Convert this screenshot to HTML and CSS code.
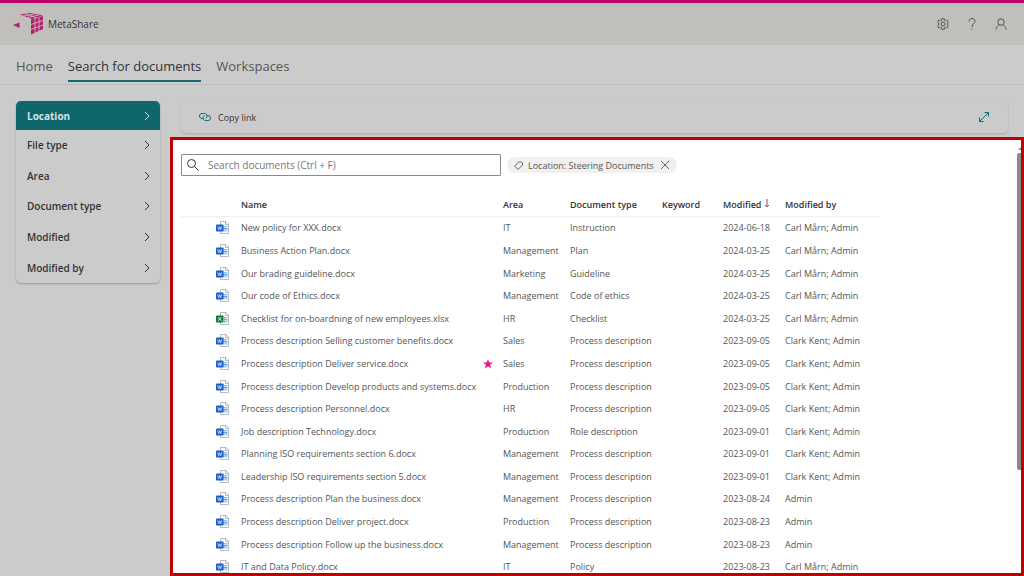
FILE: index.html
```html
<!DOCTYPE html>
<html lang="en">
<head>
    <meta charset="UTF-8">
    <meta name="viewport" content="width=device-width, initial-scale=1.0">
    <title>MetaShare</title>
    <link rel="stylesheet" href="styles.css">
</head>
<body>
    <!-- shared icons -->
    <svg class="sprite" aria-hidden="true">
        <symbol id="chevron" viewBox="0 0 8 10">
            <path d="M2 1l4 4-4 4" fill="none" stroke="currentColor" stroke-width="1"/>
        </symbol>
        <symbol id="word" viewBox="0 0 26 26">
            <path d="M9 1h11l5 5v19H9z" fill="#fff" stroke="#a3a3a3" stroke-width="1.5"/>
            <path d="M19 1v6h6" fill="none" stroke="#a3a3a3" stroke-width="1.5"/>
            <path d="M14 10h9v3h-9z" fill="#8cc4f7"/>
            <path d="M14 14h9v3h-9z" fill="#5fa3ea"/>
            <path d="M14 18h9v3h-9z" fill="#a9d0f7"/>
            <rect x="0" y="7" width="15" height="14" rx="1.5" fill="#1f5fc4"/>
            <path d="M3.500 10.500l2 7 2-6 2 6 2-7" fill="none" stroke="#dbe7f8" stroke-width="1.500"/>
        </symbol>
        <symbol id="excel" viewBox="0 0 26 26">
            <path d="M9 1h11l5 5v19H9z" fill="#fff" stroke="#a3a3a3" stroke-width="1.5"/>
            <path d="M19 1v6h6" fill="none" stroke="#a3a3a3" stroke-width="1.5"/>
            <path d="M16 10h3v3h-3zM16 18h3v3h-3z" fill="#4db882"/>
            <path d="M20 10h3v3h-3zM20 18h3v3h-3z" fill="#9bdcb6"/>
            <path d="M16 14h7v3h-7z" fill="#66c793"/>
            <rect x="0" y="7" width="15" height="14" rx="1.5" fill="#107c41"/>
            <path d="M4.500 10.500l6 7M10.500 10.500l-6 7" fill="none" stroke="#fff" stroke-width="1.800"/>
        </symbol>
    </svg>

    <header class="topbar">
        <svg class="logo" viewBox="0 0 30 22" aria-hidden="true">
            <path d="M0 12l6.500-2.500v5.500z" fill="#b71c6e"/>
            <path d="M7 1.500l10-1.500 13 2.500-11 3.500z" fill="#b71c6e"/>
            <path d="M18 6.500l12-3.500v13l-12 5.500z" fill="#b71c6e"/>
            <path d="M18 11.500l12-4M18 16.500l12-4.500M22 5v15.500M26 4v15M10 3l11-2M14 4.500l12-2.500M12 .5l12 4.500" fill="none" stroke="#c1bfbc" stroke-width=".9"/>
        </svg>
        <span class="brand">MetaShare</span>
        <div class="actions">
            <button type="button" aria-label="Settings">
                <svg width="12" height="12" viewBox="0 0 24 24" fill="none" stroke="currentColor" stroke-width="2">
                    <path d="M9.500 1.500h5l.7 3 1.600.9 3-1.500 3 3.800-1.800 2.500v3.600l1.800 2.500-3 3.800-3-1.500-1.600.9-.7 3h-5l-.7-3-1.600-.9-3 1.500-3-3.800L3 13.800v-3.600L1.200 7.700l3-3.800 3 1.500 1.600-.9z"/>
                    <circle cx="12" cy="12" r="4"/>
                </svg>
            </button>
            <button type="button" aria-label="Help">
                <svg width="12" height="12" viewBox="0 0 12 12" fill="none" stroke="currentColor" stroke-width="1">
                    <path d="M3 3.500C3 1.500 4.300.5 6 .5s3 1.200 3 2.800C9 5.600 6 5.800 6 9M6 10.500v1.200"/>
                </svg>
            </button>
            <button type="button" aria-label="Account">
                <svg width="12" height="12" viewBox="0 0 12 12" fill="none" stroke="currentColor" stroke-width="1">
                    <circle cx="6" cy="4" r="3.200"/>
                    <path d="M1 11.500c.3-2.500 1.500-4 3.300-4.700M11 11.500c-.3-2.500-1.500-4-3.300-4.700"/>
                </svg>
            </button>
        </div>
    </header>

    <nav class="tabs">
        <a href="#">Home</a>
        <a href="#" class="active">Search for documents</a>
        <a href="#">Workspaces</a>
    </nav>

    <div class="main">
        <aside class="filters">
            <button type="button" class="selected">Location<svg><use href="#chevron"/></svg></button>
            <button type="button">File type<svg><use href="#chevron"/></svg></button>
            <button type="button">Area<svg><use href="#chevron"/></svg></button>
            <button type="button">Document type<svg><use href="#chevron"/></svg></button>
            <button type="button">Modified<svg><use href="#chevron"/></svg></button>
            <button type="button">Modified by<svg><use href="#chevron"/></svg></button>
        </aside>

        <div class="content">
            <div class="toolbar">
                <button type="button" class="copy">
                    <svg width="12" height="10" viewBox="0 0 12 10" fill="none" stroke="#146c72" stroke-width="1">
                        <path d="M4 6.500H3C1.500 6.500.5 5.500.5 4S1.500 1.500 3 1.500h2.500C7 1.500 8 2.500 8 4S7.200 6 6.500 6.300"/>
                        <path d="M8 3.500h1c1.500 0 2.500 1 2.500 2.500S10.500 8.500 9 8.500H6.500C5 8.500 4 7.500 4 6s.8-2 1.500-2.300"/>
                    </svg>
                    Copy link
                </button>
                <button type="button" class="expand" aria-label="Expand">
                    <svg width="12" height="12" viewBox="0 0 12 12" fill="none" stroke="#146c72" stroke-width="1">
                        <path d="M1.500 10.500l9-9M6.500 1.500h4v4M1.500 6.500v4h4"/>
                    </svg>
                </button>
            </div>

            <main class="results">
                <div class="searchrow">
                    <label class="search">
                        <svg width="12" height="12" viewBox="0 0 12 12" fill="none" stroke="#333" stroke-width="1">
                            <circle cx="4.500" cy="4.500" r="4"/>
                            <path d="M7.500 7.500l4 4"/>
                        </svg>
                        <input type="search" placeholder="Search documents (Ctrl + F)" aria-label="Search documents">
                    </label>
                    <div class="tag">
                        <svg width="9" height="9" viewBox="0 0 9 9" fill="none" stroke="#666" stroke-width="1">
                            <path d="M4.500 1h3.200l.8.800V4L4 8.500.7 5.200z"/>
                        </svg>
                        Location: Steering Documents
                        <button type="button" aria-label="Remove filter">
                            <svg width="8" height="8" viewBox="0 0 8 8" stroke="#666" stroke-width="1">
                                <path d="M0 0l8 8M8 0L0 8"/>
                            </svg>
                        </button>
                    </div>
                </div>

                <table class="docs">
                    <colgroup>
                        <col class="c-icon">
                        <col class="c-name">
                        <col class="c-star">
                        <col class="c-area">
                        <col class="c-type">
                        <col class="c-keyword">
                        <col class="c-date">
                        <col class="c-by">
                    </colgroup>
                    <thead>
                        <tr>
                            <th></th><th>Name</th><th></th><th>Area</th><th>Document type</th><th>Keyword</th>
                            <th aria-sort="descending">Modified
                                <svg class="sort" viewBox="0 0 6 9"><path d="M3 0v8M1 6l2 2 2-2" fill="none" stroke="#8a4a8f"/></svg>
                            </th>
                            <th>Modified by</th>
                        </tr>
                    </thead>
                    <tbody>
                        <tr><td><svg><use href="#word"/></svg></td><td><a href="#">New policy for XXX.docx</a></td><td></td><td>IT</td><td>Instruction</td><td></td><td>2024-06-18</td><td>Carl Mårn; Admin</td></tr>
                        <tr><td><svg><use href="#word"/></svg></td><td><a href="#">Business Action Plan.docx</a></td><td></td><td>Management</td><td>Plan</td><td></td><td>2024-03-25</td><td>Carl Mårn; Admin</td></tr>
                        <tr><td><svg><use href="#word"/></svg></td><td><a href="#">Our brading guideline.docx</a></td><td></td><td>Marketing</td><td>Guideline</td><td></td><td>2024-03-25</td><td>Carl Mårn; Admin</td></tr>
                        <tr><td><svg><use href="#word"/></svg></td><td><a href="#">Our code of Ethics.docx</a></td><td></td><td>Management</td><td>Code of ethics</td><td></td><td>2024-03-25</td><td>Carl Mårn; Admin</td></tr>
                        <tr><td><svg><use href="#excel"/></svg></td><td><a href="#">Checklist for on-boardning of new employees.xlsx</a></td><td></td><td>HR</td><td>Checklist</td><td></td><td>2024-03-25</td><td>Carl Mårn; Admin</td></tr>
                        <tr><td><svg><use href="#word"/></svg></td><td><a href="#">Process description Selling customer benefits.docx</a></td><td></td><td>Sales</td><td>Process description</td><td></td><td>2023-09-05</td><td>Clark Kent; Admin</td></tr>
                        <tr><td><svg><use href="#word"/></svg></td><td><a href="#">Process description Deliver service.docx</a></td><td><svg class="star" viewBox="0 0 20 20"><path d="M10 0l2.700 7H20l-5.900 4.500L16.300 19 10 14.600 3.700 19l2.200-7.500L0 7h7.300z" fill="#f0108c"/></svg></td><td>Sales</td><td>Process description</td><td></td><td>2023-09-05</td><td>Clark Kent; Admin</td></tr>
                        <tr><td><svg><use href="#word"/></svg></td><td><a href="#">Process description Develop products and systems.docx</a></td><td></td><td>Production</td><td>Process description</td><td></td><td>2023-09-05</td><td>Clark Kent; Admin</td></tr>
                        <tr><td><svg><use href="#word"/></svg></td><td><a href="#">Process description Personnel.docx</a></td><td></td><td>HR</td><td>Process description</td><td></td><td>2023-09-05</td><td>Clark Kent; Admin</td></tr>
                        <tr><td><svg><use href="#word"/></svg></td><td><a href="#">Job description Technology.docx</a></td><td></td><td>Production</td><td>Role description</td><td></td><td>2023-09-01</td><td>Clark Kent; Admin</td></tr>
                        <tr><td><svg><use href="#word"/></svg></td><td><a href="#">Planning ISO requirements section 6.docx</a></td><td></td><td>Management</td><td>Process description</td><td></td><td>2023-09-01</td><td>Clark Kent; Admin</td></tr>
                        <tr><td><svg><use href="#word"/></svg></td><td><a href="#">Leadership ISO requirements section 5.docx</a></td><td></td><td>Management</td><td>Process description</td><td></td><td>2023-09-01</td><td>Clark Kent; Admin</td></tr>
                        <tr><td><svg><use href="#word"/></svg></td><td><a href="#">Process description Plan the business.docx</a></td><td></td><td>Management</td><td>Process description</td><td></td><td>2023-08-24</td><td>Admin</td></tr>
                        <tr><td><svg><use href="#word"/></svg></td><td><a href="#">Process description Deliver project.docx</a></td><td></td><td>Production</td><td>Process description</td><td></td><td>2023-08-23</td><td>Admin</td></tr>
                        <tr><td><svg><use href="#word"/></svg></td><td><a href="#">Process description Follow up the business.docx</a></td><td></td><td>Management</td><td>Process description</td><td></td><td>2023-08-23</td><td>Admin</td></tr>
                        <tr><td><svg><use href="#word"/></svg></td><td><a href="#">IT and Data Policy.docx</a></td><td></td><td>IT</td><td>Policy</td><td></td><td>2023-08-23</td><td>Carl Mårn; Admin</td></tr>
                    </tbody>
                </table>
                <div class="scrollbar"></div>
            </main>
        </div>
    </div>
</body>
</html>
```

FILE: styles.css
```css
*{
    box-sizing: border-box;
}
body{
    margin: 0;
    height: 100vh;
    display: flex;
    flex-direction: column;
    overflow: hidden;
    background-color: #cbcbcb;
    color: #333;
    font-family: "Open Sans", "Noto Sans", sans-serif;
    font-size: 10px;
}
button{
    margin: 0;
    padding: 0;
    border: 0;
    background: none;
    color: inherit;
    font: inherit;
}
a{
    color: inherit;
    text-decoration: none;
}
svg{
    display: block;
    flex: none;
}
.sprite{
    position: absolute;
    width: 0;
    height: 0;
}

/* header */
.topbar{
    display: flex;
    align-items: center;
    height: 45px;
    padding: 0 17px 0 13px;
    border-top: 3px solid #bc0068;
    background-color: #c1bfbc;
}
.logo{
    width: 30px;
    height: 22px;
}
.brand{
    margin-left: 5px;
    font-size: 10px;
}
.actions{
    display: flex;
    gap: 17px;
    margin-left: auto;
    color: #555;
}
.tabs{
    display: flex;
    gap: 15px;
    height: 40px;
    padding: 0 16px;
    border-bottom: 1px solid #bebebe;
    color: #555;
    font-size: 13px;
    line-height: 34px;
}
.tabs a{
    margin-top: 4px;
    height: 33px;
}
.tabs .active{
    border-bottom: 2px solid #146c72;
    color: #333;
}

/* left filters */
.main{
    flex: 1;
    display: flex;
    gap: 10px;
    min-height: 0;
    padding: 16px 0 0 16px;
}
.filters{
    display: flex;
    flex-direction: column;
    width: 144px;
    height: 182px;
    border-radius: 5px;
    overflow: hidden;
    box-shadow: 0 1px 2px #999;
    font-weight: 600;
}
.filters button{
    flex: 1;
    display: flex;
    align-items: center;
    justify-content: space-between;
    padding: 0 9px 0 11px;
}
.filters svg{
    width: 8px;
    height: 10px;
}
.filters .selected{
    flex: 0 0 29px;
    background-color: #0f666b;
    color: #d5e2e3;
    font-weight: 700;
}

/* content */
.content{
    flex: 1;
    display: flex;
    flex-direction: column;
    gap: 4px;
    min-width: 0;
    font-size: 9px;
}
.toolbar{
    display: flex;
    align-items: center;
    justify-content: space-between;
    height: 32px;
    margin: 0 16px 0 11px;
    padding: 0 18px;
    border-radius: 5px;
    box-shadow: 0 1px 2px #aaa;
}
.copy{
    display: flex;
    align-items: center;
    gap: 7px;
}
.results{
    position: relative;
    flex: 1;
    min-height: 0;
    overflow: hidden;
    padding: 14px 8px 0;
    border: 3px solid #c00000;
    background-color: #fff;
    color: #555;
}
.searchrow{
    display: flex;
    align-items: center;
    gap: 6px;
}
.search{
    display: flex;
    align-items: center;
    gap: 9px;
    width: 320px;
    height: 22px;
    padding: 0 5px;
    border: 1px solid #8a8a8a;
    border-radius: 1px;
}
.search input{
    flex: 1;
    padding: 0;
    border: 0;
    outline: 0;
    background: none;
    font: inherit;
    font-size: 10px;
}
.search input::placeholder{
    color: #777;
}
.tag{
    display: flex;
    align-items: center;
    gap: 5px;
    height: 16px;
    padding: 0 8px 0 7px;
    border-radius: 8px;
    background-color: #f1f0ef;
}
.tag button{
    padding-left: 2px;
}

/* documents */
.docs{
    width: 699px;
    height: 385px;
    margin-top: 17px;
    table-layout: fixed;
    border-collapse: collapse;
    white-space: nowrap;
}
.docs th{
    height: 23px;
    padding: 0;
    border-bottom: 1px solid #f0f0f0;
    color: #333;
    font-weight: 600;
    text-align: left;
}
.docs td{
    padding: 0;
}
.docs td:first-child{
    padding-left: 35px;
}
.docs td svg{
    width: 13px;
    height: 13px;
}
.docs .star{
    width: 10px;
    height: 10px;
}
.docs .sort{
    display: inline-block;
    width: 6px;
    height: 9px;
}
.c-icon{ width: 60px; }
.c-name{ width: 242px; }
.c-star{ width: 20px; }
.c-area{ width: 67px; }
.c-type{ width: 92px; }
.c-keyword{ width: 61px; }
.c-date{ width: 62px; }
.scrollbar{
    position: absolute;
    top: 13px;
    right: 0;
    width: 4px;
    height: 317px;
    border-radius: 2px 0 0 2px;
    background-color: #8a8a8a;
}
.scrollbar::before{
    content: "";
    position: absolute;
    top: -6px;
    right: 0;
    border-left: 3px solid transparent;
    border-bottom: 3px solid #8a8a8a;
}
```
